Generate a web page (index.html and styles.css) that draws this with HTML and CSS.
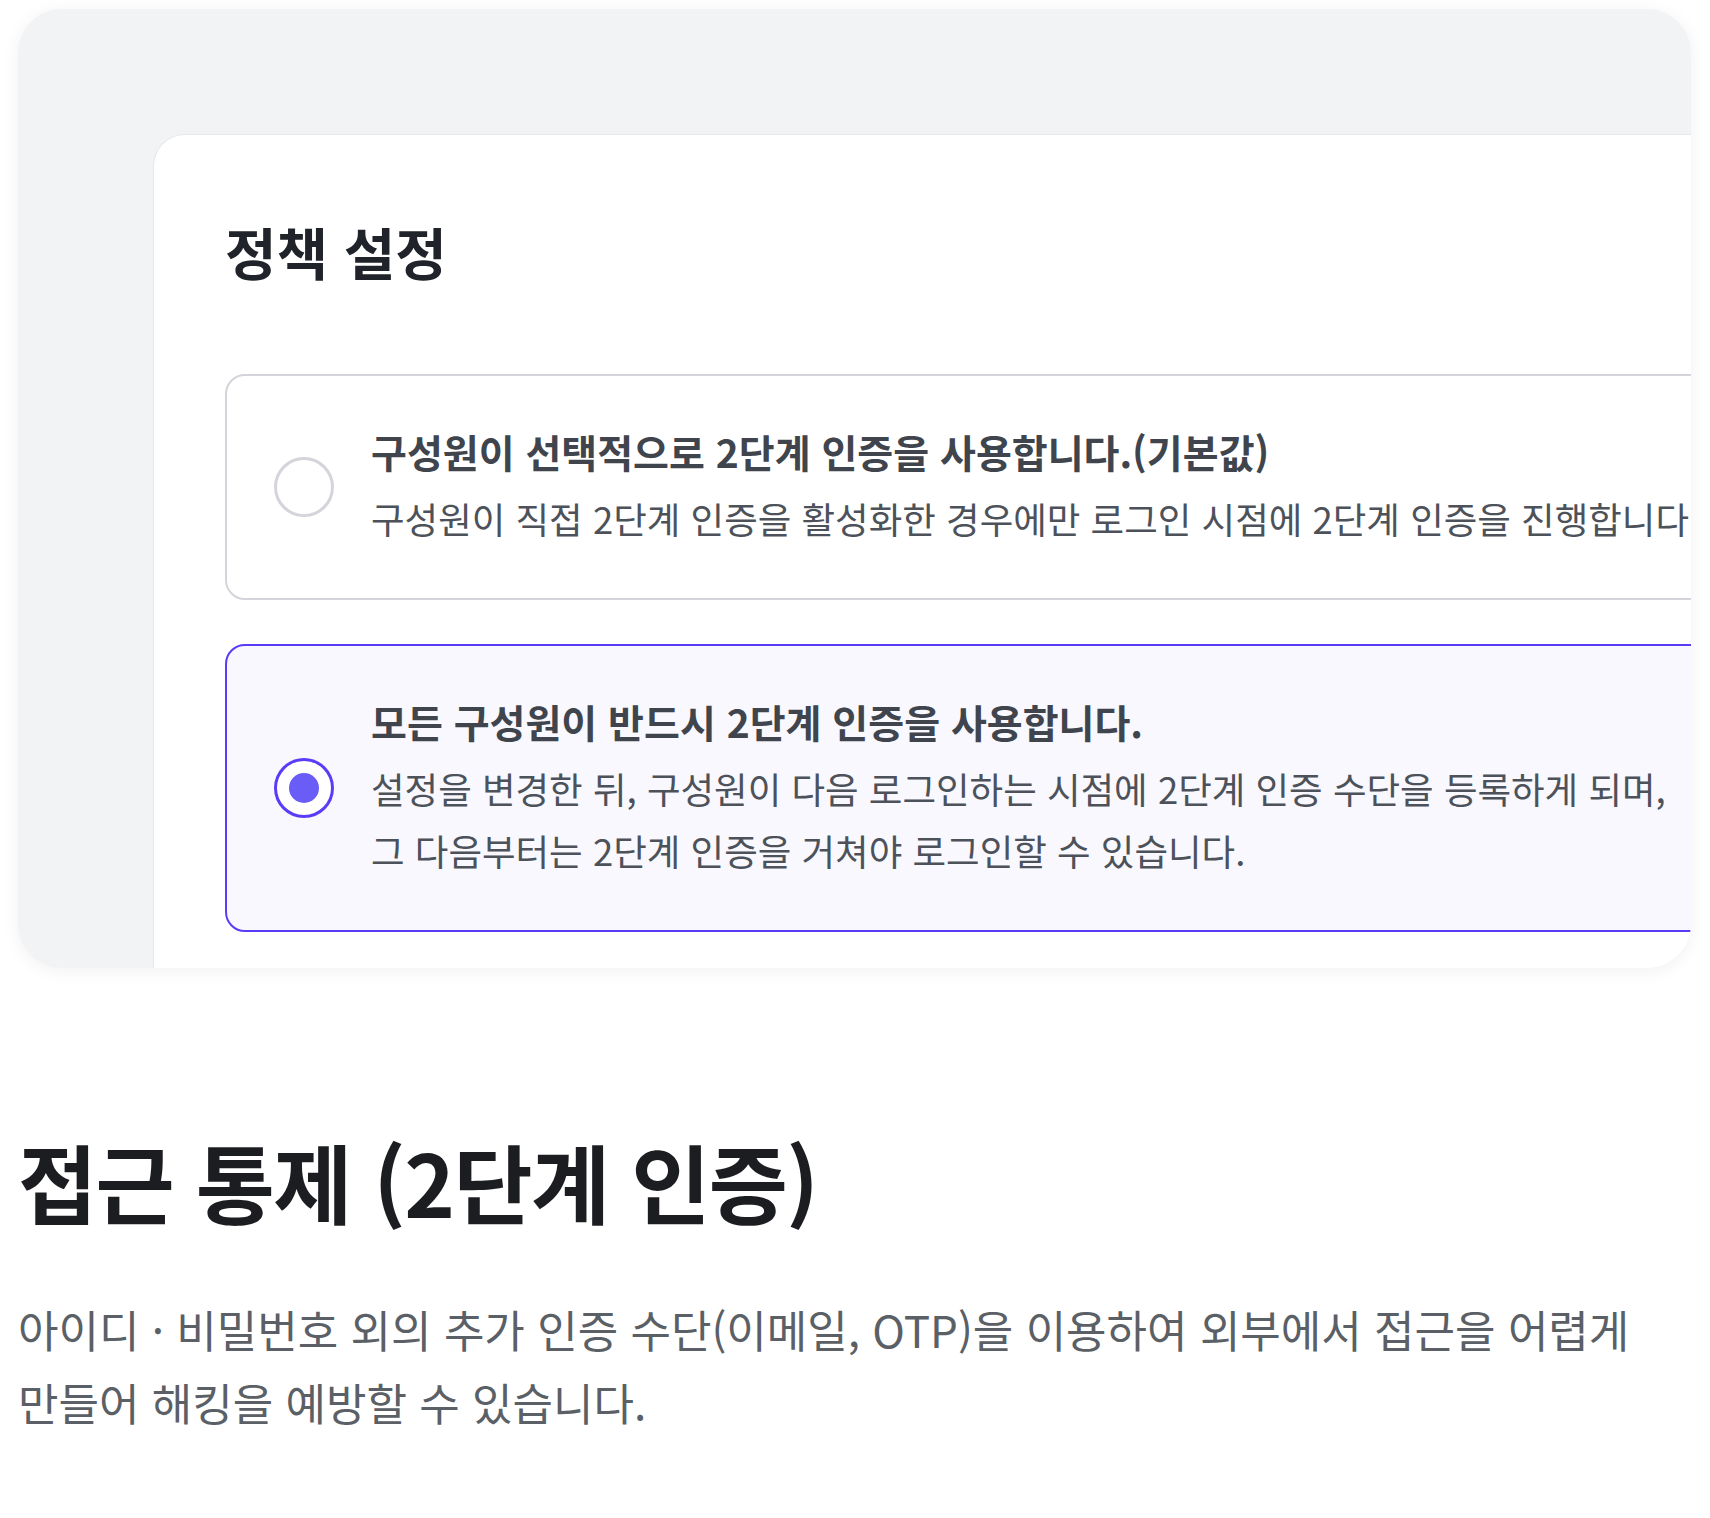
FILE: index.html
```html
<!DOCTYPE html>
<html lang="ko">
<head>
    <meta charset="UTF-8">
    <meta name="viewport" content="width=device-width, initial-scale=1.0">
    <title>접근 통제 (2단계 인증)</title>
    <link rel="stylesheet" href="styles.css">
</head>
<body>
    <!-- 미리보기 화면 -->
    <div class="preview">
        <div class="panel">
            <h2 class="panel-title">정책 설정</h2>

            <div class="option">
                <span class="radio"></span>
                <div class="option-text">
                    <p class="option-title">구성원이 선택적으로 2단계 인증을 사용합니다.(기본값)</p>
                    <p class="option-desc">구성원이 직접 2단계 인증을 활성화한 경우에만 로그인 시점에 2단계 인증을 진행합니다.</p>
                </div>
            </div>

            <div class="option selected">
                <span class="radio"></span>
                <div class="option-text">
                    <p class="option-title">모든 구성원이 반드시 2단계 인증을 사용합니다.</p>
                    <p class="option-desc">설정을 변경한 뒤, 구성원이 다음 로그인하는 시점에 2단계 인증 수단을 등록하게 되며,<br>그 다음부터는 2단계 인증을 거쳐야 로그인할 수 있습니다.</p>
                </div>
            </div>
        </div>
    </div>

    <!-- 설명 -->
    <div class="intro">
        <h1>접근 통제 (2단계 인증)</h1>
        <p>아이디 · 비밀번호 외의 추가 인증 수단(이메일, OTP)을 이용하여 외부에서 접근을 어렵게<br>만들어 해킹을 예방할 수 있습니다.</p>
    </div>
</body>
</html>
```

FILE: styles.css
```css
* {
    margin: 0;
    padding: 0;
    box-sizing: border-box;
}
body {
    background: #fff;
    font-family: "Noto Sans CJK KR", "Noto Sans", sans-serif;
}
.preview {
    display: flex;
    height: 959px;
    margin: 9px 19px 0 18px;
    padding: 125px 0 0 135px;
    background: #f2f3f5;
    border-radius: 44px;
    overflow: hidden;
    box-shadow: 0 3px 18px rgba(0, 0, 0, 0.06);
}
.panel {
    flex: none;
    width: 1700px;
    padding: 81px 0 0 71px;
    background: #fff;
    border: 1px solid #e6e7eb;
    border-right: none;
    border-bottom: none;
    border-radius: 32px 0 0 0;
}
.panel-title {
    font-size: 56px;
    line-height: 70px;
    font-weight: 700;
    color: #202329;
    margin-bottom: 88px;
}
.option {
    display: flex;
    align-items: center;
    gap: 37px;
    width: 1600px;
    padding: 48px 0 48px 47px;
    border: 2px solid #d3d5db;
    border-radius: 20px;
    background: #fff;
}
.option + .option {
    margin-top: 44px;
}
.option.selected {
    border-color: #5a3cf7;
    background: #f8f8fe;
}
.radio {
    flex: none;
    width: 60px;
    height: 60px;
    border: 3px solid #d3d5db;
    border-radius: 50%;
    background: #fff;
    display: flex;
    align-items: center;
    justify-content: center;
}
.selected .radio {
    border-color: #5a3cf7;
}
.selected .radio::after {
    content: "";
    width: 30px;
    height: 30px;
    border-radius: 50%;
    background: #6a5cf6;
}
.option-title {
    font-size: 39px;
    line-height: 54px;
    font-weight: 700;
    color: #40454d;
    margin-bottom: 10px;
    white-space: nowrap;
}
.option-desc {
    font-size: 36.5px;
    line-height: 62px;
    color: #4d525a;
    white-space: nowrap;
}
.intro {
    padding: 157px 18px 0;
}
.intro h1 {
    font-size: 86px;
    line-height: 112px;
    font-weight: 700;
    letter-spacing: -0.018em;
    color: #1c1d21;
}
.intro p {
    margin-top: 56px;
    font-size: 44px;
    line-height: 73px;
    color: #5b5f66;
}
```
